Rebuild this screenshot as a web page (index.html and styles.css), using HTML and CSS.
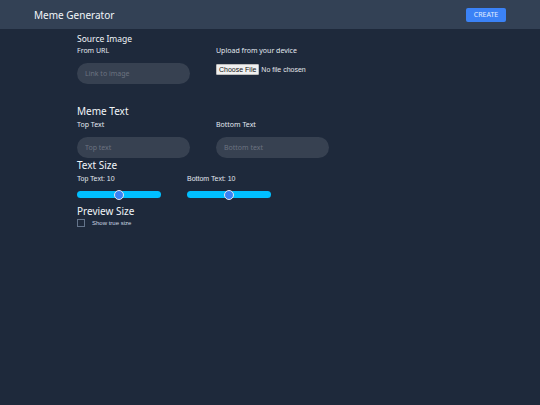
FILE: index.html
```html
<!DOCTYPE html>
<html>
<head>
<meta charset="utf-8">
<link rel="stylesheet" href="styles.css">
</head>
<body>
<header class="topbar">
  <div class="brand">Meme Generator</div>
  <button class="create-btn">CREATE</button>
</header>
<main class="content">
  <section class="section">
    <h2 class="section-title section-title-small">Source Image</h2>
    <div class="field-row">
      <div class="field field-url">
        <label class="field-label">From URL</label>
        <input class="pill-input" type="text" placeholder="Link to image">
      </div>
      <div class="field">
        <label class="field-label">Upload from your device</label>
        <input class="file-input" type="file">
      </div>
    </div>
  </section>
  <section class="section section-text">
    <h2 class="section-title">Meme Text</h2>
    <div class="field-row">
      <div class="field field-url">
        <label class="field-label">Top Text</label>
        <input class="pill-input" type="text" placeholder="Top text">
      </div>
      <div class="field">
        <label class="field-label">Bottom Text</label>
        <input class="pill-input" type="text" placeholder="Bottom text">
      </div>
    </div>
  </section>
  <section class="section section-size">
    <h2 class="section-title">Text Size</h2>
    <div class="slider-row">
      <div class="slider-field">
        <div class="slider-label">Top Text: 10</div>
        <div class="slider"><span class="thumb"></span></div>
      </div>
      <div class="slider-field">
        <div class="slider-label">Bottom Text: 10</div>
        <div class="slider"><span class="thumb"></span></div>
      </div>
    </div>
  </section>
  <section class="section section-preview">
    <h2 class="section-title">Preview Size</h2>
    <label class="check-row"><span class="checkbox"></span><span class="check-text">Show true size</span></label>
  </section>
</main>
</body>
</html>
```
FILE: styles.css
```css
html, body {
  margin: 0;
  padding: 0;
  background: #1e293b;
  height: 100%;
}
body {
  font-family: "Noto Sans", "Open Sans", sans-serif;
  color: #e5e7eb;
}
.topbar {
  height: 29px;
  background: #334155;
  display: flex;
  align-items: center;
  justify-content: space-between;
  padding: 0 34px;
  box-sizing: border-box;
}
.brand {
  font-size: 10px;
  color: #f1f5f9;
}
.create-btn {
  width: 40px;
  height: 14px;
  background: #3b82f6;
  border: none;
  border-radius: 2px;
  color: #e0ecff;
  font-family: "Noto Sans", sans-serif;
  font-size: 7px;
  padding: 0;
}
.content {
  padding-left: 77px;
}
.section-title {
  margin: 0;
  font-size: 10px;
  font-weight: 400;
  line-height: 14px;
  color: #f1f5f9;
}
.section-title-small {
  font-size: 8.5px;
}
.section {
  padding-top: 3px;
}
.section-text {
  padding-top: 20px;
}
.section-size, .section-preview {
  padding-top: 0;
}
.field-row {
  display: flex;
  margin-top: 0;
}
.section-text .field-row {
  margin-top: 2px;
}
.field {
  display: flex;
  flex-direction: column;
}
.field-url {
  width: 139px;
}
.field-label {
  font-size: 7px;
  line-height: 10px;
  color: #e2e8f0;
  margin-bottom: 7px;
}
.pill-input {
  width: 113px;
  height: 21px;
  box-sizing: border-box;
  border: none;
  border-radius: 11px;
  background: #374151;
  padding: 0 8px;
  font-family: "Noto Sans", sans-serif;
  font-size: 7px;
  color: #9ca3af;
  outline: none;
}
.pill-input::placeholder {
  color: #6b7280;
}
.file-input {
  font-family: "Liberation Sans", Arial, sans-serif;
  font-size: 7px;
  color: #e5e7eb;
  margin-top: 1px;
}
.file-input::file-selector-button {
  font-family: "Liberation Sans", Arial, sans-serif;
  font-size: 7px;
  padding: 1px 2px;
  margin-right: 2px;
  border: 1px solid #bdbdbd;
  border-radius: 1px;
  background: #f0f0f0;
  color: #111;
}
.slider-row {
  display: flex;
  margin-top: 2px;
}
.slider-field {
  width: 110px;
}
.slider-label {
  font-family: "Liberation Sans", Arial, sans-serif;
  font-size: 7px;
  line-height: 9px;
  color: #e2e8f0;
  margin-bottom: 8px;
}
.slider {
  position: relative;
  width: 84px;
  height: 7px;
  border-radius: 4px;
  background: #00bfff;
  margin-bottom: 6px;
}
.thumb {
  position: absolute;
  left: 37px;
  top: -1.5px;
  width: 10px;
  height: 10px;
  box-sizing: border-box;
  border-radius: 50%;
  background: #3b82f6;
  border: 1px solid #e5e7eb;
}
.check-row {
  display: flex;
  align-items: center;
  margin-top: 1px;
}
.checkbox {
  width: 8px;
  height: 8px;
  box-sizing: border-box;
  border: 1px solid #64748b;
  margin-right: 7px;
}
.check-text {
  font-family: "Liberation Sans", Arial, sans-serif;
  font-size: 6px;
  color: #cbd5e1;
}
```
